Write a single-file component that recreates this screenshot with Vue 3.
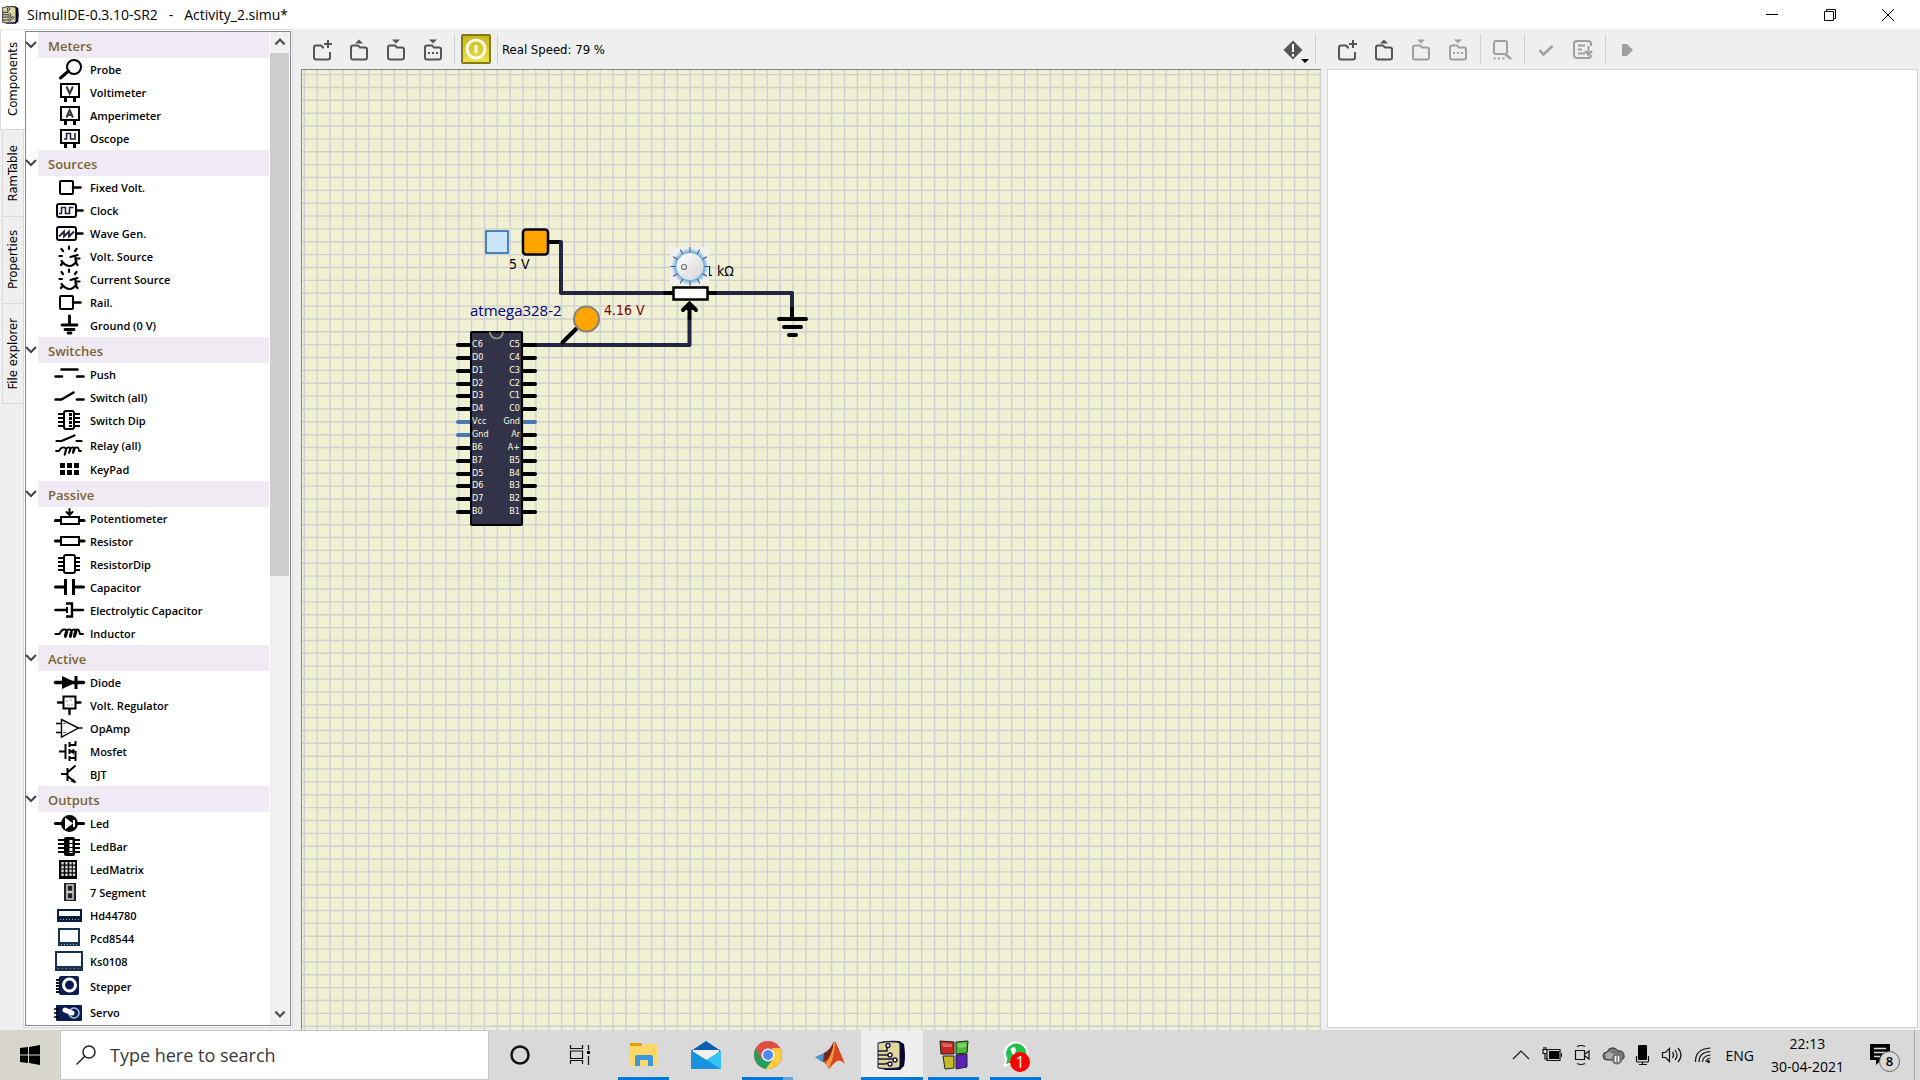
<script setup>
const K = 'fill="none" stroke="#000" stroke-linecap="round" stroke-linejoin="round"'
const dipPins = '<path d="M5 5h22M5 9h22M5 13h22M5 17h22" stroke="#000" stroke-width="2"/>'
const dial = `<path d="M8.5 16q4 5 8 5t7-5M17.500 12l7-2M22.500 12v3" ${K} stroke-width="2.200"/><path d="M16 1.500v2.500M8.500 4l1.500 2M23.500 4l-1.500 2M6.500 11h2.500M24 13.500h2.500M8 20l1.500-2M24.500 20l-1.500-2" ${K} stroke-width="2.200"/>`
const meter = '<path d="M12.5 17v4M21.5 17v4" stroke="#000" stroke-width="3"/><rect x="8" y="3" width="18" height="13" fill="#fff" stroke="#000" stroke-width="2"/>'
const box = `<rect x="7" y="5" width="13" height="13" rx="1" ${K} stroke-width="2"/><path d="M20 11.5h7.5" ${K} stroke-width="2.5"/>`
const wideBox = `<rect x="4" y="5" width="19" height="13" rx="2" ${K} stroke-width="2"/><path d="M24 11.5h5.500" ${K} stroke-width="2.5"/>`

const icons = {
  probe: `<circle cx="21" cy="9" r="7" ${K} stroke-width="2"/><path d="M7.5 20l8-7" ${K} stroke-width="3"/>`,
  volt: meter + `<path d="M13.5 5.5l3.2 7 3.2-7" fill="none" stroke="#333" stroke-width="2"/>`,
  amp: meter + `<path d="M13.5 13.5l3.2-7.5 3.2 7.5M14.5 11h4.5" fill="none" stroke="#333" stroke-width="2"/>`,
  scope: meter + `<path d="M11 12h2.5V6.500h4V12h4.500V6" fill="none" stroke="#224" stroke-width="1.6"/>`,
  box,
  clock: wideBox + `<path d="M6 14.5h2.500v-6h4v6h4v-6h4" fill="none" stroke="#224" stroke-width="1.6"/>`,
  wave: wideBox + `<path d="M6 14.5l5-5v5l5-5v5l5-5" fill="none" stroke="#224" stroke-width="1.8"/>`,
  dial,
  ground: `<path d="M16.5 2v9M9 11h15" ${K} stroke-width="2.8"/><path d="M12 15.5h9M15 19h3" ${K} stroke-width="2.8"/>`,
  push: `<path d="M8.5 6.500h16M2.5 13.5h6.5M24 13.5h6.5" ${K} stroke-width="2.6"/>`,
  switch: `<path d="M2.5 13.5h6l12-7M24 13.5h6.5" ${K} stroke-width="2.6"/>`,
  switchDip: dipPins + `<rect x="11" y="2" width="10" height="18" rx="2" fill="#fff" stroke="#000" stroke-width="2"/><path d="M17.5 4v14" stroke="#000" stroke-width="3" stroke-dasharray="3 1"/>`,
  relay: `<path d="M3.5 7h5l13-5.5M23.5 7h5" ${K} stroke-width="2.2"/><path d="M3 17h3q2-4 5-3.500t1.500 5T12 19q1-6 4-5.500T16 19q1-6 4-5.500T20 19q0-5 3-5.500t3 3.500h2" ${K} stroke-width="1.8"/>`,
  keypad: '<path d="M7 5h5v5h-5zM14 5h5v5h-5zM21 5h5v5h-5zM7 12h5v5h-5zM14 12h5v5h-5zM21 12h5v5h-5z"/>',
  pot: `<path d="M2.5 13.5h5M27 13.5h4" ${K} stroke-width="3.2"/><rect x="8" y="10" width="18" height="7" fill="#fff" stroke="#000" stroke-width="2"/><path d="M16.5 2v5M13.5 5l3 3 3-3" ${K} stroke-width="2"/>`,
  resistor: `<path d="M2.5 11h5M27 11h4" ${K} stroke-width="3.2"/><rect x="8" y="7" width="18" height="8" fill="#fff" stroke="#000" stroke-width="2"/>`,
  resDip: dipPins + '<rect x="11" y="2" width="11" height="18" rx="2" fill="#fff" stroke="#000" stroke-width="2"/>',
  cap: `<path d="M2.5 11h10M21 11h9.5" ${K} stroke-width="3"/><path d="M12.5 3v16M20.5 3v16" stroke="#000" stroke-width="3"/>`,
  ecap: `<path d="M2.5 11h11M21 11h9" ${K} stroke-width="2.6"/><path d="M14 8v6" stroke="#000" stroke-width="2"/><path d="M13 4.500h6v13h-6" fill="none" stroke="#000" stroke-width="2.4"/>`,
  coil: `<path d="M2.5 12h4q2-5 5.500-4.500T13 14q-1 2-1 0 1-7 4.500-6.500T18 14q-1 2-1 0 1-7 4.500-6.500T22 14q-1 2-1 0 1-6 3-6.500T27 12h3" ${K} stroke-width="2"/>`,
  diode: `<path d="M2.5 11.5h28" ${K} stroke-width="3.4"/><path d="M9 5l14 6.5-14 6.5z"/><path d="M23 5v13" stroke="#000" stroke-width="3"/>`,
  reg: `<path d="M5 8.500h6M22 8.500h5.5M16.5 15v5" ${K} stroke-width="2.4"/><rect x="10.5" y="2.5" width="12" height="12" fill="#fff" stroke="#000" stroke-width="2"/><path d="M14 6v2M18 5v2M14 11h3M19 10v2" stroke="#999"/>`,
  opamp: '<path d="M8.5 2.5l17 8.5-17 9zM3 6.500h5.5M3 15.5h5.5M25.5 11h4" fill="none" stroke="#000" stroke-width="1.4"/><path d="M10 6.500h3M10 15.5h3" stroke="#777"/>',
  mosfet: '<path d="M6 11.5h6M12.5 4v15M16.5 2v5M16.5 9v5M16.5 16v5M16.5 5h6v-4M16.5 11.5h6M16.5 18h6M22.5 11v10" fill="none" stroke="#000" stroke-width="2"/><path d="M17 11.5l4-3v6z"/>',
  bjt: '<path d="M8 11h6M14.5 5v13M14.5 9.500l8-7M14.5 13l8 6.500" fill="none" stroke="#000" stroke-width="2"/><path d="M22.5 20l-5-1.500 3-3z"/>',
  led: `<path d="M2.5 11.5h28" ${K} stroke-width="3.2"/><circle cx="16.5" cy="11.5" r="8.5"/><path d="M12 5.500l8 6-8 6z" fill="#fff"/><path d="M21 8v7" stroke="#fff" stroke-width="2"/>`,
  ledBar: dipPins + '<rect x="11" y="2" width="11" height="19" rx="2"/><path d="M18 5v13" stroke="#fff" stroke-width="3" stroke-dasharray="3 1"/>',
  matrix: '<path d="M6 2h18v19h-18z"/><path d="M9.5 4v15M13.5 4v15M17.5 4v15M21 4v15" stroke="#fff" stroke-width="2.4" stroke-dasharray="2.6 1.2" opacity=".85"/>',
  seven: '<path d="M11 2h12v18h-12z" fill="#222"/><path d="M14 4h6v6.500h-6zM14 11.5h6v6.500h-6z" fill="none" stroke="#ccc" stroke-width="1.6"/>',
  hd: '<path d="M4 5h25v13h-25z" fill="#0b1c40"/><path d="M6 7h21v5h-21z" fill="#f4fcf6"/><path d="M7 15.5h19" stroke="#9ab" stroke-dasharray="1 2"/>',
  pcd: '<path d="M5 1h22v18h-22z" fill="#17324a"/><path d="M7 3h18v12h-18z" fill="#fbfefc"/><path d="M8 17.5h16" stroke="#abc" stroke-dasharray="1 2"/>',
  ks: '<path d="M2 1h28v20h-28z" fill="#17324a"/><path d="M4 3h24v13h-24z" fill="#fbfefc"/><path d="M5 18.5h22" stroke="#89a" stroke-dasharray="1 3"/>',
  stepper: '<rect x="6" y="1" width="20" height="19" rx="2" fill="#0a1c50"/><path d="M5 4v15" stroke="#111" stroke-width="4" stroke-dasharray="2 1"/><circle cx="16.5" cy="10" r="6" fill="#0a1c50" stroke="#fff" stroke-width="3"/>',
  servo: '<rect x="3" y="4" width="26" height="16" rx="1" fill="#0a1c50"/><path d="M1 8h5M1 12h5M1 16h5" stroke="#000" stroke-width="1.6"/><circle cx="21" cy="12" r="5" fill="none" stroke="#a9c3dd" stroke-width="1.6"/><path d="M12 9l7 3" stroke="#fff" stroke-width="5" stroke-linecap="round"/>',
}

const groups = [
  { name: 'Meters', items: [['Probe', 'probe'], ['Voltimeter', 'volt'], ['Amperimeter', 'amp'], ['Oscope', 'scope']] },
  { name: 'Sources', items: [['Fixed Volt.', 'box'], ['Clock', 'clock'], ['Wave Gen.', 'wave'], ['Volt. Source', 'dial'], ['Current Source', 'dial'], ['Rail.', 'box'], ['Ground (0 V)', 'ground']] },
  { name: 'Switches', items: [['Push', 'push'], ['Switch (all)', 'switch'], ['Switch Dip', 'switchDip'], ['Relay (all)', 'relay', true], ['KeyPad', 'keypad']] },
  { name: 'Passive', items: [['Potentiometer', 'pot'], ['Resistor', 'resistor'], ['ResistorDip', 'resDip'], ['Capacitor', 'cap'], ['Electrolytic Capacitor', 'ecap'], ['Inductor', 'coil']] },
  { name: 'Active', items: [['Diode', 'diode'], ['Volt. Regulator', 'reg'], ['OpAmp', 'opamp'], ['Mosfet', 'mosfet'], ['BJT', 'bjt']] },
  { name: 'Outputs', items: [['Led', 'led'], ['LedBar', 'ledBar'], ['LedMatrix', 'matrix'], ['7 Segment', 'seven'], ['Hd44780', 'hd'], ['Pcd8544', 'pcd'], ['Ks0108', 'ks'], ['Stepper', 'stepper', true], ['Servo', 'servo', true]] },
]

const tabs = [['Components', 'tall'], ['RamTable', 'short'], ['Properties', 'short'], ['File explorer', 'tall']]

const folder = '<path d="M13 6.500H11L9 4.500H4Q2 4.500 2 6.500V16.500Q2 18.500 4 18.500H16Q18 18.500 18 16.500V8.500Q18 6.500 16 6.500H11" fill="none" stroke="currentColor" stroke-width="2"/>'
const tools = {
  create: '<path d="M12 6.500H11L9 4.500H4Q2 4.500 2 6.500V16.500Q2 18.500 4 18.500H16Q18 18.500 18 16.500V11M16-1v8M12 3h8" fill="none" stroke="currentColor" stroke-width="2"/>',
  open: folder + '<path d="M6 2.5l4-4 4 4z" fill="currentColor"/>',
  save: folder + '<path d="M6-1.500l4 4 4-4z" fill="currentColor"/>',
  saveAs: folder + '<path d="M6-1.500l4 4 4-4z" fill="currentColor"/><path d="M5 11h2v2H5zM9 11h2v2H9zM13 11h2v2h-2z" fill="currentColor"/>',
  find: '<rect x="2" y="0" width="13" height="13" rx="2" fill="none" stroke="currentColor" stroke-width="2"/><path d="M13 13l6 5" stroke="currentColor" stroke-width="2.5"/><path d="M1.5 16.5h2v2h-2zM6 16.5h2v2H6zM10.500 16.5h2v2h-2z" fill="currentColor"/>',
  check: '<path d="M3.5 9l4 4.500 9-8.500" fill="none" stroke="currentColor" stroke-width="2.5"/>',
  upload: '<path d="M18 5V3Q18 0 15 0H4Q1 0 1 3v11q0 3 3 3h11q3 0 3-3M5 4.500h7M5 8.500h4M5 12.500h7M15.500 5v8M12 10l3.500 4 3.500-4" fill="none" stroke="currentColor" stroke-width="2"/>',
  play: '<path d="M5 3h5l6 6-6 6H5z" fill="currentColor"/>',
  alert: '<path d="M10-.5L19.500 9 10 18.500.5 9z" fill="currentColor"/><path d="M10 3v8M10 13v2.500" stroke="#fff" stroke-width="2"/>',
}
const fileTools = [['New', 'create'], ['Open', 'open'], ['Save', 'save'], ['Save as', 'saveAs']]

const pitch = 12.86
const gridPath = [
  ...Array.from({ length: 200 }, (_, i) => `M${(2.4 + i * pitch).toFixed(2)} 0V2600`),
  ...Array.from({ length: 200 }, (_, i) => `M0 ${(4.6 + i * pitch).toFixed(2)}H2600`),
].join('')

const left = ['C6', 'D0', 'D1', 'D2', 'D3', 'D4', 'Vcc', 'Gnd', 'B6', 'B7', 'D5', 'D6', 'D7', 'B0']
const right = ['C5', 'C4', 'C3', 'C2', 'C1', 'C0', 'Gnd', 'Ar', 'A+', 'B5', 'B4', 'B3', 'B2', 'B1']
const pins = left.map((l, i) => ({ l, r: right[i], y: Math.round(275 + i * pitch) }))
const pinColor = (n, i) => ((n === 'Vcc' || n === 'Gnd') && i < 8 ? '#4679b0' : '#000')
const ticks = Array.from({ length: 12 }, (_, i) => i * 30)

const board = '<path d="M1 3Q8 0 22 1l5 3q2 12 0 22l-4 4H9L1 28z" fill="#0a0433"/><path d="M1 3q9-2 19-1 3 0 3 3v20q0 3-3 3-10 1-19 0z" fill="#dcd898" stroke="#1c1440"/><path d="M1 11h9V7M1 15h10M1 19h15M1 24h7l3-1" fill="none" stroke="#1c1440" stroke-width="1.5"/><g fill="#fff" stroke="#1c1440" stroke-width="1.4"><circle cx="11" cy="5.5" r="2"/><circle cx="13" cy="15" r="2"/><circle cx="18" cy="20" r="2"/><circle cx="13" cy="24" r="2"/></g>'
const apps = [
  { name: 'File Explorer', bar: 'on', art: '<path d="M1 3h12v5H1z" fill="#e0a005"/><path d="M1 6h13l2-2h12v21q0 1-1 1H2q-1 0-1-1z" fill="#ffd764"/><path d="M6 26V17q0-2 2-2h14q2 0 2 2v9h-5v-6h-8v6z" fill="#3a96dd"/>' },
  { name: 'Mail', bar: '', art: '<path d="M0 11L15 1l15 10v2H0z" fill="#0a5eb0"/><path d="M2 10h26v7L15 22 2 17z" fill="#f2f2f2"/><path d="M0 10.500l15 9.500 15-9.500V29H0z" fill="#35c2f5"/><path d="M0 10.500L30 29H0z" fill="#1b92e0"/>' },
  { name: 'Chrome', bar: 'split', art: '<circle cx="15" cy="15" r="14" fill="#dd4f43"/><path d="M3 8A14 14 0 0 0 13 28.800L20 19H8z" fill="#1fa060"/><path d="M27 8a14 14 0 0 1-14 20.800L20 19l-1-11z" fill="#ffcd40"/><path d="M3 8l6 10 3-10h15A14 14 0 0 0 3 8z" fill="#dd4f43"/><circle cx="15" cy="15" r="6.5" fill="#fff"/><circle cx="15" cy="15" r="5" fill="#4a8af4"/>' },
  { name: 'Matlab', bar: '', art: '<path d="M0 17l9-4 5-4-3 12-4 1z" fill="#4a96cc"/><path d="M9 13q5-1 10-12l-3 19-8 2z" fill="#7c2318"/><path d="M20 1q4 8 10 23-4-5-8-3-4 3-8 8-3-6-6-7 8-2 12-21z" fill="#d9481c"/><path d="M20 1q0 14-6 27-3-3-3-5 5-6 9-22z" fill="#f49b3c"/>' },
  { name: 'SimulIDE', bar: 'wide', art: board },
  { name: 'Code::Blocks', bar: 'on', art: '<path d="M1 1l14 1v12H2z" fill="#c8271f"/><path d="M17 2l12-1-1 12-11 1z" fill="#4dbb32"/><path d="M4 16h11v12l-9 1z" fill="#c5bd25"/><path d="M17 15l11-1v13l-11 2z" fill="#5a21b5"/><path d="M1 1l14 1v12H2zM17 2l12-1-1 12-11 1zM4 16h11v12l-9 1zM17 15l11-1v13l-11 2z" fill="none" stroke="#222"/><path d="M3 3l10 1v3H4zM19 4l8-1v4l-8 1z" fill="#fff" opacity=".3"/>' },
  { name: 'WhatsApp', bar: 'on', art: '<path d="M2 27l2-7A12.500 12.500 0 1 1 9 25z" fill="#fff"/><path d="M5 24l1.500-5A10.200 10.200 0 1 1 10 22.500z" fill="#25c04e"/><path d="M10 8q-1 4 3 8t8 3l1-3-3-1-2 1q-3-2-3-4l1-1-1-4z" fill="#fff"/>' },
]
</script>

<template>
  <div class="desktop">
    <header class="title">
      <svg class="logo" viewBox="0 0 30 31" v-html="board"></svg>
      <h1>SimulIDE-0.3.10-SR2&nbsp;&nbsp; -&nbsp;&nbsp; Activity_2.simu*</h1>
      <div class="winbtns">
        <button aria-label="Minimize"><svg width="12" height="12"><path d="M0 5.500h12" /></svg></button>
        <button aria-label="Restore"><svg width="12" height="12"><path d="M.5 2.500h9v9h-9zM2.500 2.500v-2h9v9h-2" /></svg></button>
        <button aria-label="Close"><svg width="12" height="12"><path d="M0 0l12 12M12 0L0 12" /></svg></button>
      </div>
    </header>

    <main>
      <nav class="tabs">
        <button v-for="([t, size], i) in tabs" :key="t" :class="[size, { current: i === 0 }]"><span>{{ t }}</span></button>
      </nav>
      <section class="pane">
        <div class="frame">
          <div class="tree">
            <section v-for="g in groups" :key="g.name">
              <h2>
                <svg class="chev" viewBox="0 0 12 12"><path d="M0 3l5 5 5-5" /></svg>
                <span>{{ g.name }}</span>
              </h2>
              <ul>
                <li v-for="[label, icon, high] in g.items" :key="label" :class="{ high }">
                  <svg viewBox="0 0 32 23" v-html="icons[icon]"></svg>{{ label }}
                </li>
              </ul>
            </section>
          </div>
          <div class="scroll">
            <svg viewBox="0 0 12 12"><path d="M2 8l4-4 4 4" /></svg>
            <div class="track"><div class="thumb"></div></div>
            <svg viewBox="0 0 12 12"><path d="M2 4l4 4 4-4" /></svg>
          </div>
        </div>
      </section>

      <section class="circuit">
        <div class="toolbar">
          <button v-for="[n, ic] in fileTools" :key="n" :aria-label="n"><svg viewBox="0 -2 20 21" v-html="tools[ic]"></svg></button>
          <i class="sep"></i>
          <button class="power" aria-label="Power">
            <svg viewBox="0 0 24 24"><circle cx="12" cy="12" r="9" /><path d="M12 8v8" /></svg>
          </button>
          <i class="sep"></i>
          <span class="speed">Real Speed: 79 %</span>
          <button class="alert" aria-label="Messages"><svg viewBox="0 -2 20 21" v-html="tools.alert"></svg><i class="drop"></i></button>
          <i class="sep"></i>
        </div>
        <div class="canvas">
          <svg class="scene">
            <path :d="gridPath" stroke="#d0d0d2" stroke-width="1.4" />
            <g fill="none" stroke="#262440" stroke-width="4" stroke-linejoin="round" stroke-linecap="round">
              <path d="M247 172h11" stroke="#000" />
              <path d="M259 172v51h104M413 223h77v16M387.5 248v27H233" />
            </g>
            <rect x="183" y="160" width="24" height="24" fill="#f0f4f4" />
            <rect x="184" y="161" width="22" height="22" fill="#cce4f7" stroke="#1763a3" stroke-width="1.5" />
            <rect x="221" y="159.5" width="25" height="25" rx="3" fill="#ffa500" stroke="#000" stroke-width="2.5" />
            <text class="val" x="207" y="199">5 V</text>
            <text class="val" x="403" y="206">1 kΩ</text>
            <text class="val red" x="302" y="245">4.16 V</text>
            <text class="chipname" x="168" y="246">atmega328-2</text>

            <g class="ink">
              <path d="M363 223h8M405 223h8M490 239v10M477 249h27M482 257h17M487 265h7" />
              <path d="M387.5 235v13M381 240l6.5-6.5 6.5 6.5" />
              <path d="M274 259l-13.5 13.5" />
            </g>
            <path d="M380 240l7.5-8.5 7.500 8.500z" />
            <rect x="371.5" y="217.5" width="34" height="12" fill="#fff" stroke="#000" stroke-width="2.5" />
            <circle cx="284.5" cy="249" r="12.5" fill="#ffa500" stroke="#808080" stroke-width="2" />

            <defs>
              <radialGradient id="halo"><stop offset=".75" stop-color="#6aaee0" /><stop offset="1" stop-color="#f0f0f0" /></radialGradient>
              <linearGradient id="knob" x1="0" y1="0" x2="1" y2="1"><stop offset="0" stop-color="#fff" /><stop offset="1" stop-color="#d4d4d4" /></linearGradient>
            </defs>
            <rect x="368" y="177" width="39" height="38" fill="#f0f0f0" />
            <circle cx="388" cy="196.5" r="18.5" fill="url(#halo)" />
            <path v-for="a in ticks" :key="a" d="M388 177v5" stroke="#456" :transform="`rotate(${a} 388 196.5)`" />
            <circle cx="388" cy="196.5" r="13.5" fill="url(#knob)" />
            <circle cx="382" cy="197" r="2.5" fill="#eee" stroke="#777" stroke-width="1.2" />

            <g class="ink">
              <template v-for="(p, i) in pins" :key="p.y">
                <path :d="`M156 ${p.y}h12`" :stroke="pinColor(p.l, i)" />
                <path :d="`M221 ${p.y}h12`" :stroke="pinColor(p.r, i)" />
              </template>
            </g>
            <rect x="169" y="262" width="51" height="193" rx="1" fill="#323248" stroke="#000" stroke-width="2" />
            <path d="M188 262a6.5 6.5 0 0 0 13 0" fill="none" stroke="#a09f96" stroke-width="1.5" />
            <g class="pin">
              <template v-for="p in pins" :key="p.y">
                <text x="170" :y="p.y + 2">{{ p.l }}</text>
                <text x="218" :y="p.y + 2" text-anchor="end">{{ p.r }}</text>
              </template>
            </g>
          </svg>
        </div>
      </section>

      <section class="editor">
        <div class="toolbar">
          <button v-for="([n, ic], i) in fileTools" :key="n" :aria-label="n" :disabled="i > 1"><svg viewBox="0 -2 20 21" v-html="tools[ic]"></svg></button>
          <i class="sep"></i>
          <button disabled aria-label="Find"><svg viewBox="0 -2 20 21" v-html="tools.find"></svg></button>
          <i class="sep"></i>
          <button disabled aria-label="Compile"><svg viewBox="0 -2 20 21" v-html="tools.check"></svg></button>
          <button disabled aria-label="Upload"><svg viewBox="0 -2 20 21" v-html="tools.upload"></svg></button>
          <i class="sep"></i>
          <button disabled aria-label="Debug"><svg viewBox="0 -2 20 21" v-html="tools.play"></svg></button>
        </div>
        <textarea aria-label="Source editor"></textarea>
      </section>
    </main>

    <footer class="taskbar">
      <button class="start" aria-label="Start"><svg width="20" height="20"><path d="M0 3l8-1v7.500H0zM9 2l11-2v9.500H9zM0 10.500h8V18l-8-1zM9 10.500h11V20L9 18z" /></svg></button>
      <label class="search">
        <svg width="20" height="20"><circle cx="13" cy="7" r="6" /><path d="M8.500 11.500L.5 19.500" /></svg>
        <input type="text" placeholder="Type here to search" aria-label="Search" />
      </label>
      <button class="app" aria-label="Cortana"><svg width="30" height="30"><circle cx="15" cy="15" r="8.5" fill="none" stroke="#111" stroke-width="2.5" /></svg></button>
      <button class="app" aria-label="Task view">
        <svg width="30" height="30"><path d="M3.500 5v3.500h12V5M3.500 24v-3.500h12V24M3.500 11h12v7.500h-12zM21.500 5v5M21.500 16v9" fill="none" stroke="#111" stroke-width="1.2" /><path d="M20 11h3v3h-3z" /></svg>
      </button>
      <button v-for="a in apps" :key="a.name" class="app" :class="a.bar" :aria-label="a.name">
        <svg width="30" height="30" viewBox="0 0 30 30" v-html="a.art"></svg>
        <b v-if="a.name === 'WhatsApp'" class="badge">1</b>
      </button>
      <div class="tray">
        <svg width="16" height="30"><path d="M0 19l8-8 8 8" class="ln" /></svg>
        <svg width="20" height="30"><path d="M7 11h10v8H7zM19 13h1v4h-1z" /><path d="M5 9.500h13v11H5zM1 9.500h4v4H1zM2 7v3M4 7v3M3 13v6h3" class="ln" /></svg>
        <svg width="15" height="30"><path d="M.5 10.500h9v9h-9zM10 14l4-3v8l-4-3M2 6.500q4-2 8 0M2 23.500q4 2 8 0" class="ln" /></svg>
        <svg width="20" height="30"><path d="M4 20a4 4 0 0 1 0-8 6 6 0 0 1 11-1 5 5 0 0 1 4 9z" fill="#777" stroke="#333" /><path d="M4 19a4 4 0 0 1 1-7q6 0 8 7z" fill="#aaa" /><circle cx="14" cy="19" r="5.5" fill="#777" /><path d="M12.500 16v6M15.500 16v6" stroke="#fff" stroke-width="1.5" /></svg>
        <svg width="13" height="30"><rect x="2" y="5" width="9" height="15" rx="1" /><path d="M.5 16v5q0 1 1 1h10q1 0 1-1v-5M6.500 22v3M3 24.500h8" class="ln" /></svg>
        <svg width="20" height="30"><path d="M.5 12.500h3l4-4v13l-4-4h-3zM10.500 12q2 3 0 6M13 10q4 5 0 10M16 8q6 7 0 14" class="ln" /></svg>
        <svg width="16" height="30"><path d="M.5 22Q0 9 15.500 8M4 22q0-10 11.500-10.500M7.500 22q0-6 8-7M11 22q0-3 4.500-4" class="ln" /><circle cx="13.5" cy="21.5" r="1.5" /></svg>
        <span class="lang">ENG</span>
        <time>22:13<br />30-04-2021</time>
        <span class="note">
          <svg width="20" height="22"><path d="M0 0h20v16h-9l-5 5v-5H0z" /><path d="M4 4.500h12M4 8.500h12M4 12.500h6" stroke="#ddd" stroke-width="1.4" /></svg>
          <b>8</b>
        </span>
        <i class="edge"></i>
      </div>
    </footer>
  </div>
</template>

<style>
body { margin: 0; background: #efefef; }
</style>

<style scoped>
.desktop {
  --humanist: "Open Sans", "Noto Sans", sans-serif;
  --panel: "DejaVu Sans Condensed", "DejaVu Sans", sans-serif;
  display: flex; flex-direction: column; min-height: 100vh;
  background: #efefef; color: #000; font-family: var(--humanist);
}
button { border: 0; padding: 0; background: none; font: inherit; color: inherit; display: flex; align-items: center; justify-content: center; }
svg { display: block; flex: none; overflow: visible; }
h1, h2, ul { margin: 0; padding: 0; font-weight: 400; }
.title { height: 29px; display: flex; align-items: center; background: #fff; }
.logo { width: 18px; height: 20px; margin-left: 2px; }
h1 { font-size: 14px; line-height: 20px; margin-left: 7px; }
.winbtns { margin-left: auto; display: flex; padding-right: 3px; }
.winbtns button { width: 58px; height: 29px; }
.winbtns path { fill: none; stroke: #000; }

main { flex: 1; display: flex; }
.tabs { width: 23px; display: flex; flex-direction: column; padding-top: 1px; font: 13px/18px var(--panel); }
.tabs button { margin-left: 2px; border: 1px solid #dadada; border-top: 0; border-right: 0; height: 87px; width: 21px; }
.tabs .tall { height: 100px; }
.tabs .current { margin-left: 0; width: 25px; background: #fff; position: relative; }
.tabs span { writing-mode: vertical-rl; transform: rotate(180deg); }
.pane { width: 267px; border: 1px solid #dadada; background: #fff; padding: 1px 0 1px 1px; display: flex; margin-bottom: 2px; }
.frame { flex: 1; border: 1px solid #828790; display: flex; margin-right: 1px; }
.tree { flex: 1; }
h2 { display: flex; height: 26px; align-items: center; font-size: 13px; font-weight: 600; color: #7b642f; }
h2 span { flex: 1; line-height: 24px; background: #f0eaf5; padding: 2px 0 0 10px; }
.chev { width: 12px; height: 12px; }
.chev path, .scroll path { fill: none; stroke: #444; stroke-width: 2; }
.scroll path { stroke: #555; }
ul { list-style: none; }
li { display: flex; align-items: center; height: 23px; padding-left: 27px; gap: 5px; font-size: 11px; font-weight: 600; white-space: nowrap; }
li.high { height: 26px; }
li svg { width: 32px; height: 23px; }
.scroll { width: 19px; margin: 0 1px; background: #f0f0f0; display: flex; flex-direction: column; align-items: center; }
.scroll svg { width: 14px; height: 14px; margin: 3px 0 4px; }
.track { flex: 1; width: 100%; }
.thumb { height: 55%; background: #cdcdcd; }

.circuit { flex: 1019; margin-left: 8px; display: flex; flex-direction: column; }
.editor { flex: 591; margin: 0 2px 2px 6px; display: flex; flex-direction: column; }
.toolbar { height: 40px; display: flex; align-items: center; color: #555; padding-left: 2px; }
.toolbar button { width: 37px; height: 36px; }
.toolbar button svg { width: 20px; height: 21px; }
.toolbar button:disabled { color: #a0a0a0; }
.sep { width: 1px; height: 30px; margin: 0 3px; background: #d0d0d0; }
.toolbar .power { width: 30px; height: 30px; margin: 0 3px; border: 2px solid #857a10; border-radius: 2px; background: linear-gradient(#c8b820, #ecdf4c); }
.toolbar .power svg { width: 24px; height: 24px; }
.power circle, .power path { fill: none; stroke: #fffde8; stroke-width: 3; }
.speed { font: 13px/18px var(--panel); color: #000; padding: 1px 0 0 1px; }
.toolbar .alert { margin-left: auto; position: relative; }
.alert + .sep { margin-right: 5px; }
.drop { position: absolute; right: 3px; bottom: 4px; border: 4px solid transparent; border-top-color: #000; border-bottom: 0; }
.canvas { flex: 1; border: 1px solid #828790; border-width: 1px 0 0 1px; background: #f0f0d2; display: grid; overflow: hidden; }
.scene { width: 100%; height: 100%; overflow: hidden; }
.ink path { fill: none; stroke-width: 4; stroke-linecap: round; }
.ink { stroke: #000; }
.val { font: 14px var(--panel); }
.red { fill: #800000; }
.chipname { font: 15px var(--humanist); fill: #000080; }
.pin { font: 9px var(--panel); fill: #ffffe0; }
textarea { flex: 1; border: 1px solid #d5d5d5; background: #fff; resize: none; padding: 4px; }

.taskbar { height: 50px; display: flex; background: linear-gradient(90deg, #d8d5cb, #d9d9d9 300px); }
.start { width: 60px; }
.search { width: 412px; height: 48px; border: 1px solid #c8c8c8; background: #fff; display: flex; align-items: center; padding-left: 15px; gap: 14px; }
.search svg { fill: none; stroke: #222; stroke-width: 1.5px; }
.search input { border: 0; padding: 0; flex: 1; font: 18px/24px var(--humanist); outline: 0; }
.search input::placeholder { color: #3a3a3a; opacity: 1; }
.app { width: 62px; position: relative; }
.app::after { content: ""; position: absolute; bottom: 0; left: 5px; right: 6px; height: 3px; }
.on::after { background: #0078d7; }
.split::after { background: linear-gradient(90deg, #0078d7 80%, #5fa9e0 80%); }
.wide { background: #eeeeee; }
.wide::after { background: #0078d7; left: 0; right: 0; }
.badge { position: absolute; left: 25px; top: 22px; width: 20px; height: 20px; border-radius: 50%; background: #f00; color: #fff; font-size: 16px; line-height: 20px; font-weight: 400; text-align: center; }
.tray { margin-left: auto; display: flex; align-items: center; gap: 13px; }
.tray .ln { fill: none; stroke: #111; stroke-width: 1.2px; }
.lang { font-size: 14px; margin-left: 1px; }
time { font-size: 14px; line-height: 23px; text-align: center; margin-left: 4px; }
.note { position: relative; margin-left: 13px; width: 31px; }
.note b { position: absolute; left: 9px; top: 7px; width: 19px; height: 19px; border: 1px solid #666; border-radius: 50%; background: #d9d9d9; font-size: 13px; line-height: 19px; font-weight: 600; text-align: center; }
.edge { width: 5px; height: 50px; border-left: 1px solid #aaa; }
</style>
